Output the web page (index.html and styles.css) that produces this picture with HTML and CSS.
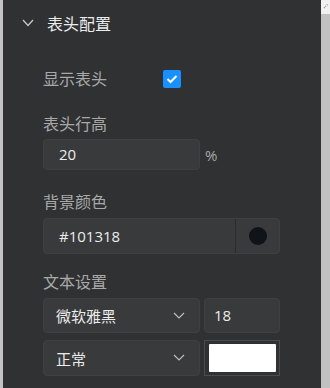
FILE: index.html
```html
<!DOCTYPE html>
<html lang="zh-CN">

<head>
  <meta charset="UTF-8" />
  <meta name="viewport" content="width=device-width, initial-scale=1" />
  <title>表头配置</title>
  <link rel="stylesheet" href="styles.css">
</head>

<body>
  <div class="frame">
    <div class="edge"></div>

    <div class="panel">
      <div class="section-head">
        <svg class="arrow" width="12" height="8" viewBox="0 0 12 8">
          <polyline points="1,1 6,6.5 11,1" fill="none" stroke="#c8c8c8" stroke-width="1.3" />
        </svg>
        <span class="section-title">表头配置</span>
      </div>

      <div class="form">
        <div class="row-check">
          <span class="label">显示表头</span>
          <span class="checkbox">
            <svg width="12" height="10" viewBox="0 0 12 10">
              <polyline points="1.5,5 4.5,8 10.5,2" fill="none" stroke="#fff" stroke-width="2" />
            </svg>
          </span>
        </div>

        <div class="label gap-top">表头行高</div>
        <div class="row-unit">
          <div class="input short">20</div>
          <span class="unit">%</span>
        </div>

        <div class="label gap-top2">背景颜色</div>
        <div class="color-input">
          <span class="color-text">#101318</span>
          <span class="color-pick"><span class="dot"></span></span>
        </div>

        <div class="label gap-top3">文本设置</div>
        <div class="row-pair first">
          <div class="select">
            <span>微软雅黑</span>
            <svg width="12" height="8" viewBox="0 0 12 8">
              <polyline points="1,1 6,6 11,1" fill="none" stroke="#bdbdbd" stroke-width="1.2" />
            </svg>
          </div>
          <div class="input num">18</div>
        </div>
        <div class="row-pair">
          <div class="select">
            <span>正常</span>
            <svg width="12" height="8" viewBox="0 0 12 8">
              <polyline points="1,1 6,6 11,1" fill="none" stroke="#bdbdbd" stroke-width="1.2" />
            </svg>
          </div>
          <div class="swatch"><span class="swatch-fill"></span></div>
        </div>
      </div>
    </div>

    <div class="scrollbar">
      <div class="scroll-btn">
        <svg width="9" height="14" viewBox="0 0 9 14">
          <polyline points="3,8 7,4" fill="none" stroke="#8a8a8a" stroke-width="1.2" stroke-dasharray="1 1" />
        </svg>
      </div>
    </div>
  </div>
</body>

</html>
```

FILE: styles.css
```css
* { margin: 0; padding: 0; box-sizing: border-box; }
body {
  font-family: "Noto Sans CJK SC", "Open Sans", sans-serif;
  background: #303133;
  color: #e6e6e6;
  width: 330px; height: 388px; overflow: hidden;
}
.frame { display: flex; height: 388px; }
.edge { width: 3px; background: #c3c3c3; }
.panel { flex: 1; background: #303133; }
.scrollbar { width: 9px; background: #c1c1c1; }
.scroll-btn { height: 14px; background: #f0f0f0; }
.scroll-btn svg { display: block; }

.section-head {
  display: flex; align-items: center;
  height: 46px; padding-left: 19px;
}
.arrow { margin-right: 13px; margin-top: -1px; }
.section-title { font-size: 16px; line-height: 20px; color: #ececec; }

.form { padding-left: 40px; padding-right: 41px; }
.label { font-size: 16px; line-height: 20px; color: #a9a9a9; }
.row-check {
  display: flex; align-items: center; gap: 56px;
  margin-top: 22px; height: 20px;
}
.checkbox {
  width: 18px; height: 18px; border-radius: 2px;
  background: #1890ff; margin-top: 2px;
  display: flex; align-items: center; justify-content: center;
}
.checkbox svg { display: block; }
.gap-top { margin-top: 25px; }
.gap-top2 { margin-top: 21px; }
.gap-top3 { margin-top: 17px; }

.input, .select, .color-input {
  background: #393a3c; border: 1px solid #3f4042;
  border-radius: 4px; font-size: 15px; color: #ececec;
  font-family: "Open Sans", "Noto Sans CJK SC", sans-serif;
}
.row-unit { display: flex; align-items: center; margin-top: 6px; }
.input.short {
  width: 157px; height: 31px; line-height: 29px; padding-left: 15px;
}
.unit { margin-left: 5px; font-size: 15px; color: #a9a9a9; font-family: "Open Sans", sans-serif; }

.color-input {
  display: flex; height: 36px; margin-top: 7px;
}
.color-text { flex: 1; line-height: 34px; padding-left: 15px; }
.color-pick {
  width: 44px; border-left: 1px solid #2c2d2f;
  display: flex; align-items: center; justify-content: center;
}
.dot { width: 18px; height: 18px; border-radius: 50%; background: #101318; }

.row-pair { display: flex; gap: 4px; margin-top: 7px; height: 36px; }
.row-pair.first { height: 35px; margin-top: 7px; }
.select {
  width: 157px; display: flex; align-items: center;
  justify-content: space-between; padding: 0 14px 0 12px;
  font-family: "Noto Sans CJK SC", sans-serif;
}
.select span { font-size: 15px; }
.input.num { flex: 1; line-height: 33px; padding-left: 9px; }
.swatch {
  flex: 1; border: 1px solid #4a4b4d; padding: 3px 3px 3px 4px;
  display: flex;
}
.swatch-fill { flex: 1; background: #fff; border-radius: 1px; }
```
